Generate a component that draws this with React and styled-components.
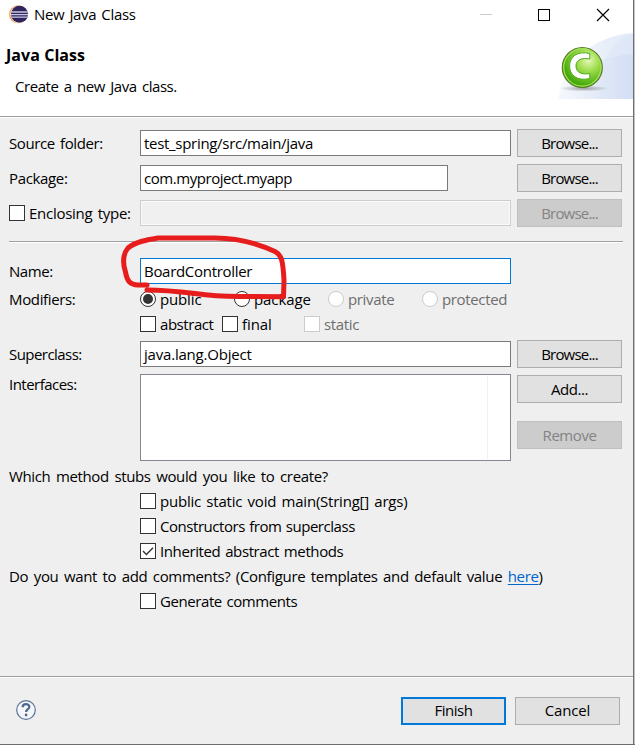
import React from "react";
import styled, { createGlobalStyle, css } from "styled-components";

const Global = createGlobalStyle`
  *, *::before, *::after { box-sizing: border-box; }
  body { margin: 0; background: #efefef; }
`;

const Dialog = styled.main`
  position: relative;
  width: 635px;
  height: 745px;
  overflow: hidden;
  display: flex;
  flex-direction: column;
  background: #efefef;
  border-bottom: 1px solid #6d6b6e;
  color: #000;
  font: 15px/20px "Open Sans", "Noto Sans", sans-serif;
  &::after {
    content: "";
    position: absolute;
    top: 0;
    right: 0;
    width: 2px;
    height: 745px;
    background: linear-gradient(90deg, #6f6f6f 50%, #c4c4c4 50%);
  }
`;

const Text = styled.span`
  display: inline-block;
  white-space: nowrap;
  letter-spacing: ${(p) => p.$ls ?? -0.45}px;
  word-spacing: ${(p) => p.$ws ?? 0.8}px;
`;

const Header = styled.header`
  flex: none;
  height: 118px;
  background: #fff;
  border-bottom: 1px solid #fff;
  box-shadow: inset 0 -1px #a0a0a0;
  display: flex;
  flex-direction: column;
`;

const TitleBar = styled.div`
  display: flex;
  align-items: center;
  height: 29px;
  padding-left: 9px;
  gap: 5px;
  & > span { padding-bottom: 2px; }
`;

const WindowControls = styled.svg`
  margin-left: auto;
  margin-right: 19px;
`;

const Banner = styled.div`
  display: flex;
  justify-content: space-between;
  height: 87px;
  padding: 4px 1px 0 6px;
`;

const BannerCopy = styled.div`
  padding-top: 12px;
  display: flex;
  flex-direction: column;
  gap: 11px;
`;

const Heading = styled.h1`
  margin: 0;
  font-size: 16px;
  line-height: 20px;
  font-weight: 700;
  letter-spacing: 0.05px;
`;

const Subtitle = styled(Text)`
  margin-left: 9px;
`;

const Body = styled.section`
  flex: none;
  height: 558px;
  padding: 11px 10px 0 9px;
`;

const Row = styled.div`
  display: grid;
  grid-template-columns: 131px 371px 105px;
  align-items: center;
  height: 28px;
  margin-bottom: ${(p) => p.$gap ?? 7}px;
  & > :nth-child(3) { margin-left: 6px; }
`;

const Field = styled.div`
  height: 26px;
  width: ${(p) => p.$w ?? 371}px;
  padding: 2px 3px;
  background: #fff;
  border: 1px solid #7a7a7a;
  ${(p) => p.$focused && css`border-color: #0078d7;`}
  ${(p) => p.$disabled && css`
    background: #f0f0f0;
    border-color: #cccccc;
    box-shadow: inset 0 0 0 1px #fafafa;
  `}
`;

const Button = styled.button`
  width: 105px;
  height: 28px;
  padding: 0 0 1px;
  font: inherit;
  color: #000;
  background: #e1e1e1;
  border: 1px solid #adadad;
  border-radius: 0;
  ${(p) => p.$primary && css`border: 2px solid #0078d7;`}
  &:disabled {
    color: #838383;
    background: #cccccc;
    border-color: #bfbfbf;
  }
`;

const Separator = styled.div`
  height: 2px;
  background: linear-gradient(#a0a0a0 50%, #fff 50%);
  margin: 14px 2px 14px 0;
`;

const OptionRow = styled.div`
  display: flex;
  align-items: center;
  height: 25px;
  padding-left: ${(p) => p.$indent ?? 131}px;
`;

const Option = styled.label`
  display: flex;
  align-items: center;
  gap: 4px;
  width: ${(p) => (p.$w ? p.$w + "px" : "auto")};
  color: ${(p) => (p.$disabled ? "#6d6d6d" : "#000")};
`;

const Box = styled.span`
  flex: none;
  display: grid;
  place-items: center;
  width: 16px;
  height: 16px;
  background: #fff;
  border: 1px solid ${(p) => (p.$disabled ? "#cccccc" : "#333")};
`;

const Dot = styled(Box)`
  border-radius: 50%;
  &::before {
    content: "";
    width: 10px;
    height: 10px;
    border-radius: 50%;
    background: ${(p) => (p.$on ? "#333" : "transparent")};
  }
`;

const Modifiers = styled.div`
  display: grid;
  grid-template-columns: 131px auto;
  margin-top: -6px;
  margin-bottom: 4px;
  & > :first-child { padding-top: 3px; }
`;

const ListBlock = styled.div`
  display: grid;
  grid-template-columns: 131px 371px 105px;
  align-items: start;
  height: 87px;
  margin: -1px 0 2px;
`;

const ListBox = styled.div`
  height: 87px;
  padding: 1px 22px 1px 1px;
  border: 1px solid #828790;
  background: #fff;
  &::before {
    content: "";
    display: block;
    height: 83px;
    border-right: 1px solid #edf1f7;
  }
`;

const ListButtons = styled.div`
  display: flex;
  flex-direction: column;
  gap: 18px;
  padding: 1px 0 0 6px;
`;

const Question = styled.div`
  height: 25px;
  padding-top: 3px;
`;

const Link = styled.a`
  color: #0066cc;
  text-decoration: underline;
  text-decoration-thickness: 1px;
  text-underline-offset: 2px;
`;

const Footer = styled.footer`
  height: 69px;
  display: flex;
  align-items: center;
  gap: 9px;
  padding: 1px 15px 0 15px;
  box-shadow: inset 0 1px #a0a0a0, inset 0 2px #fff;
  & > svg { margin-right: auto; margin-bottom: 2px; }
`;

const Marker = styled.svg`
  position: absolute;
  left: 115px;
  top: 230px;
  pointer-events: none;
`;

const EclipseLogo = () => (
  <svg width="20" height="20" viewBox="0 0 20 20">
    <circle cx="9" cy="9.3" r="9" fill="#f5a45c" />
    <circle cx="10.2" cy="9.3" r="8.8" fill="#fff1df" />
    <circle cx="10.5" cy="9.3" r="8.5" fill="#2e255f" />
    <path d="M2.3 7h16.4M2 9.7h17M2.6 12.2h16" stroke="#c9c6df" strokeWidth="1.3" />
  </svg>
);

const ClassArt = () => (
  <svg width="76" height="67" viewBox="0 0 76 67">
    <defs>
      <linearGradient id="sky" x1="0" x2="1">
        <stop offset="0" stopColor="#f5f7fc" />
        <stop offset="1" stopColor="#cfdcf3" />
      </linearGradient>
      <radialGradient id="ball" cx=".65" cy=".32" r=".7">
        <stop offset="0" stopColor="#e6f8b8" />
        <stop offset=".4" stopColor="#9ddc4b" />
        <stop offset="1" stopColor="#37a000" />
      </radialGradient>
      <radialGradient id="shade">
        <stop offset="0" stopColor="#777" stopOpacity=".65" />
        <stop offset="1" stopColor="#777" stopOpacity="0" />
      </radialGradient>
    </defs>
    <path d="M0 66C4 32 34 2 76 0V66Z" fill="url(#sky)" opacity=".65" />
    <path d="M38 66C38 35 51 8 76 0V66Z" fill="#d9e3f7" opacity=".4" />
    <path d="M0 66C15 35 42 23 76 21V66Z" fill="url(#sky)" opacity=".8" />
    <ellipse cx="26" cy="55.5" rx="25" ry="3" fill="url(#shade)" />
    <circle cx="24.3" cy="34.5" r="20" fill="url(#ball)" stroke="#5d7b2d" strokeWidth="1.2" />
    <circle cx="24.3" cy="34.5" r="18.6" fill="none" stroke="#a3e45b" strokeWidth="1.2" />
    <path d="M31.8 20.500C19 17.5 11.6 24 11.6 33S19 48.500 31.8 45.500V40.500C24 42 18 39.500 18 33S24 24.500 31.8 26Z" fill="#fff" stroke="#4da921" strokeWidth="1" />
  </svg>
);

const Check = ({ children, checked, disabled, w, ls, ws }) => (
  <Option $w={w} $disabled={disabled}>
    <Box $disabled={disabled}>
      {checked && (
        <svg width="14" height="14" viewBox="0 0 14 14">
          <path d="M2 7l3.4 3.4L12 3.7" fill="none" stroke="#333" strokeWidth="1.4" />
        </svg>
      )}
    </Box>
    <Text $ls={ls} $ws={ws}>{children}</Text>
  </Option>
);

const Radio = ({ children, on, disabled, w, ls }) => (
  <Option $w={w} $disabled={disabled}>
    <Dot $on={on} $disabled={disabled} />
    <Text $ls={ls}>{children}</Text>
  </Option>
);

const BrowseButton = ({ disabled }) => (
  <Button disabled={disabled}><Text $ls={-0.8}>Browse...</Text></Button>
);

export default function App() {
  return (
    <Dialog>
      <Global />
      <Header>
        <TitleBar>
          <EclipseLogo />
          <Text $ls={-0.35} $ws={1.6}>New Java Class</Text>
          <WindowControls width="136" height="20" viewBox="0 0 136 20" fill="none" stroke="#000" shapeRendering="crispEdges">
            <path d="M0 9.5h12" stroke="#ccc" />
            <rect x="58.5" y="4.5" width="11" height="11" />
            <path d="M117 4l12 12M129 4l-12 12" shapeRendering="auto" strokeWidth="1.2" />
          </WindowControls>
        </TitleBar>
        <Banner>
          <BannerCopy>
            <Heading>Java Class</Heading>
            <Subtitle $ws={1.9}>Create a new Java class.</Subtitle>
          </BannerCopy>
          <ClassArt />
        </Banner>
      </Header>

      <Body>
        <Row>
          <Text $ls={-0.4} $ws={1.8}>Source folder:</Text>
          <Field><Text $ls={-0.3}>test_spring/src/main/java</Text></Field>
          <BrowseButton />
        </Row>
        <Row>
          <Text $ls={-0.35}>Package:</Text>
          <Field $w={308}><Text>com.myproject.myapp</Text></Field>
          <BrowseButton />
        </Row>
        <Row $gap={0}>
          <Check ls={-0.28} ws={1.8}>Enclosing type:</Check>
          <Field $disabled />
          <BrowseButton disabled />
        </Row>
        <Separator />
        <Row>
          <Text>Name:</Text>
          <Field $focused><Text $ls={-0.3}>BoardController</Text></Field>
        </Row>
        <Modifiers>
          <Text $ls={-0.35}>Modifiers:</Text>
          <div>
            <OptionRow $indent={0}>
              <Radio on w={94} ls={-0.15}>public</Radio>
              <Radio w={94} ls={-0.1}>package</Radio>
              <Radio disabled w={94} ls={-0.35}>private</Radio>
              <Radio disabled ls={-0.35}>protected</Radio>
            </OptionRow>
            <OptionRow $indent={0}>
              <Check w={82} ls={-0.45}>abstract</Check>
              <Check w={82} ls={-0.1}>final</Check>
              <Check disabled ls={-0.35}>static</Check>
            </OptionRow>
          </div>
        </Modifiers>
        <Row>
          <Text $ls={-0.55}>Superclass:</Text>
          <Field><Text $ls={-0.2}>java.lang.Object</Text></Field>
          <BrowseButton />
        </Row>
        <ListBlock>
          <Text $ls={-0.52}>Interfaces:</Text>
          <ListBox />
          <ListButtons>
            <Button><Text>Add...</Text></Button>
            <Button disabled><Text>Remove</Text></Button>
          </ListButtons>
        </ListBlock>
        <Question><Text $ls={-0.36} $ws={2}>Which method stubs would you like to create?</Text></Question>
        <OptionRow><Check ls={-0.22} ws={1.7}>public static void main(String[] args)</Check></OptionRow>
        <OptionRow><Check>Constructors from superclass</Check></OptionRow>
        <OptionRow><Check checked ls={-0.4} ws={1.4}>Inherited abstract methods</Check></OptionRow>
        <Question>
          <Text $ls={-0.335} $ws={1.9}>Do you want to add comments? (Configure templates and default value <Link>here</Link>)</Text>
        </Question>
        <OptionRow><Check ls={-0.42} ws={1.2}>Generate comments</Check></OptionRow>
      </Body>

      <Footer>
        <svg width="22" height="22" viewBox="0 0 22 22">
          <circle cx="11" cy="11" r="9.3" fill="#f5f6f9" stroke="#5b7398" strokeWidth="1.2" />
          <path d="M7.7 8.2C7.7 4.2 14.5 4.3 14.3 8C14.2 10.3 11.2 10.2 11.1 13" fill="none" stroke="#4f688f" strokeWidth="2.3" />
          <circle cx="11.1" cy="16" r="1.4" fill="#4f688f" />
        </svg>
        <Button $primary><Text>Finish</Text></Button>
        <Button><Text $ls={-0.15}>Cancel</Text></Button>
      </Footer>

      <Marker width="180" height="76" viewBox="115 230 180 76" fill="none" stroke="#e71d1d" strokeWidth="5" strokeLinecap="round" strokeLinejoin="round">
        <path d="M147 285H138C130 284.500 127 281 125.500 272C122 261 123 254 128 248C135 242 146 240 158 238H215C240 238 263 246 275 251.500C282 255 283 262 284 280L283.500 296.800L240 296.500C225 296.500 205 295 195 293.500C178 291.500 162 290 147 290" />
      </Marker>
    </Dialog>
  );
}
